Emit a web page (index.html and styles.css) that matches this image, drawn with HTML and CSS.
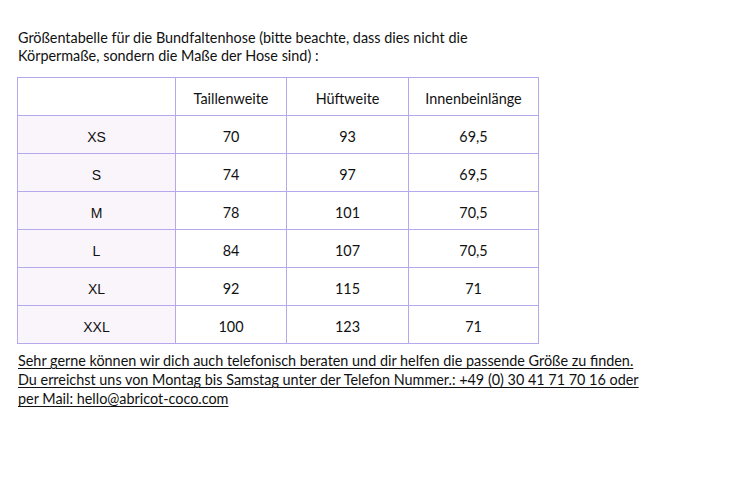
FILE: index.html
```html
<!DOCTYPE html>
<html lang="de">
<head>
<meta charset="utf-8">
<title>Größentabelle</title>
<link rel="stylesheet" href="styles.css">
</head>
<body>
<p class="intro">Größentabelle für die Bundfaltenhose (bitte beachte, dass dies nicht die<br>Körpermaße, sondern die Maße der Hose sind) :</p>
<table class="sizes">
  <colgroup>
    <col class="c1"><col class="c2"><col class="c3"><col class="c4">
  </colgroup>
  <tr><td class="label"></td><td>Taillenweite</td><td>Hüftweite</td><td>Innenbeinlänge</td></tr>
  <tr><td class="label size">XS</td><td>70</td><td>93</td><td>69,5</td></tr>
  <tr><td class="label size">S</td><td>74</td><td>97</td><td>69,5</td></tr>
  <tr><td class="label size">M</td><td>78</td><td>101</td><td>70,5</td></tr>
  <tr><td class="label size">L</td><td>84</td><td>107</td><td>70,5</td></tr>
  <tr><td class="label size">XL</td><td>92</td><td>115</td><td>71</td></tr>
  <tr><td class="label size">XXL</td><td>100</td><td>123</td><td>71</td></tr>
</table>
<p class="contact">Sehr gerne können wir dich auch telefonisch beraten und dir helfen die passende Größe zu finden.<br>Du erreichst uns von Montag bis Samstag unter der Telefon Nummer.: +49 (0) 30 41 71 70 16 oder<br>per Mail: hello@abricot-coco.com</p>
</body>
</html>
```
FILE: styles.css
```css
html, body { margin: 0; padding: 0; background: #fff; }
body {
  padding: 29px 17px 0 18px;
  font-family: Lato, "Open Sans", sans-serif;
  font-size: 14.4px;
  color: #111;
}
.intro {
  margin: 0 0 12px 0;
  line-height: 18px;
}
.sizes {
  border-collapse: collapse;
  margin-left: -1px;
  table-layout: fixed;
}
.c1 { width: 158px; }
.c2 { width: 111px; }
.c3 { width: 122px; }
.c4 { width: 130px; }
.sizes td {
  border: 1px solid #b3a9ec;
  height: 38px;
  padding: 5px 0 0 0;
  box-sizing: border-box;
  text-align: center;
  vertical-align: middle;
  line-height: 18px;
}
.sizes td.size {
  background: #f9f5fb;
  font-family: "Liberation Sans", Arial, sans-serif;
  font-size: 14px;
}
.contact {
  margin: 7px 0 0 0;
  line-height: 19px;
  text-decoration: underline;
  text-underline-offset: 2px;
  text-decoration-thickness: 1px;
}
```
